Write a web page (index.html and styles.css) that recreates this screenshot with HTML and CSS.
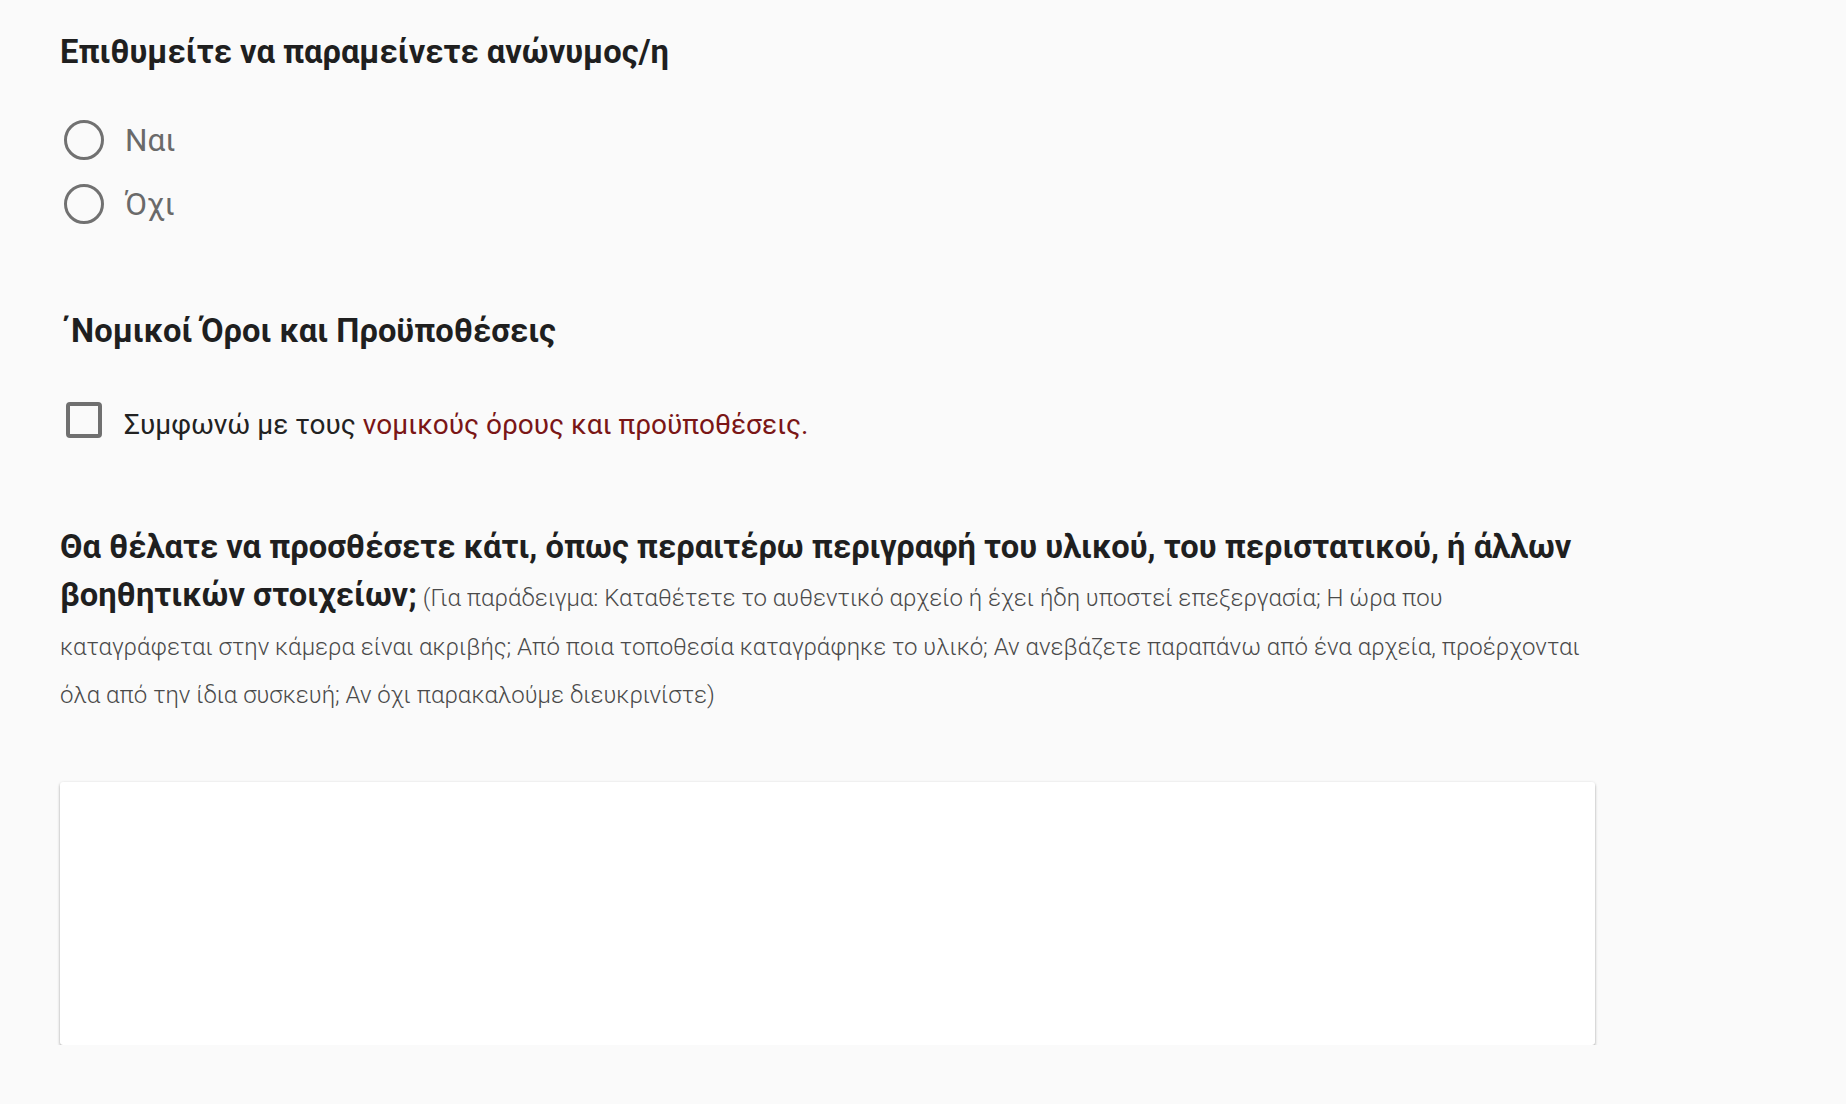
FILE: index.html
```html
<!DOCTYPE html>
<html lang="el">
<head>
  <meta charset="UTF-8" />
  <meta name="viewport" content="width=device-width, initial-scale=1.0"/>
  <title>Υποβολή υλικού</title>
  <link rel="stylesheet" href="styles.css">
</head>
<body>
  <form class="report-form">
    <!-- Anonymity -->
    <section class="field" id="anonymous">
      <h2 class="field-title">Επιθυμείτε να παραμείνετε ανώνυμος/η</h2>
      <div class="radio-group">
        <label class="radio">
          <input type="radio" name="anonymous" value="yes" />
          <span>Ναι</span>
        </label>
        <label class="radio">
          <input type="radio" name="anonymous" value="no" />
          <span>Όχι</span>
        </label>
      </div>
    </section>

    <!-- Terms -->
    <section class="field" id="terms">
      <h2 class="field-title">΄Νομικοί Όροι και Προϋποθέσεις</h2>
      <label class="checkbox">
        <input type="checkbox" name="terms" />
        <span>Συμφωνώ με τους <a href="#">νομικούς όρους και προϋποθέσεις.</a></span>
      </label>
    </section>

    <!-- Extra info -->
    <section class="field" id="extra">
      <p class="field-question">
        <strong>Θα θέλατε να προσθέσετε κάτι, όπως περαιτέρω περιγραφή του υλικού, του περιστατικού, ή άλλων βοηθητικών στοιχείων;</strong>
        <small>(Για παράδειγμα: Καταθέτετε το αυθεντικό αρχείο ή έχει ήδη υποστεί επεξεργασία; Η ώρα που καταγράφεται στην κάμερα είναι ακριβής; Από ποια τοποθεσία καταγράφηκε το υλικό; Αν ανεβάζετε παραπάνω από ένα αρχεία, προέρχονται όλα από την ίδια συσκευή; Αν όχι παρακαλούμε διευκρινίστε)</small>
      </p>
      <textarea name="details"></textarea>
    </section>
  </form>
</body>
</html>
```

FILE: styles.css
```css
* {
  box-sizing: border-box;
  margin: 0;
  padding: 0;
}
body {
  font-family: Roboto, 'Noto Sans', sans-serif;
  background: #fafafa;
  color: #212121;
}
.report-form {
  width: 1535px;
  margin-left: 60px;
  padding-top: 30px;
}
.field-title {
  font-size: 32.7px;
  line-height: 44px;
  font-weight: 700;
  color: #1f1f1f;
}

/* Radios */
.radio-group {
  margin-top: 34px;
}
.radio {
  display: flex;
  align-items: center;
  height: 64px;
  gap: 21px;
  font-size: 31.5px;
  color: #6a6a6a;
  cursor: pointer;
}
.radio input {
  appearance: none;
  width: 40px;
  height: 40px;
  margin-left: 4px;
  border: 3px solid #717171;
  border-radius: 50%;
  background: transparent;
}
.radio input:checked {
  background: radial-gradient(circle, #717171 0 8px, transparent 9px);
}

/* Checkbox */
#terms {
  margin-top: 73px;
}
.checkbox {
  display: flex;
  align-items: center;
  height: 64px;
  margin-top: 39px;
  gap: 22px;
  font-size: 28px;
  color: #222;
  cursor: pointer;
}
.checkbox input {
  appearance: none;
  width: 36px;
  height: 36px;
  margin-left: 6px;
  margin-top: -8px;
  border: 4px solid #707070;
  border-radius: 4px;
  background: transparent;
}
.checkbox input:checked {
  background: #707070;
}
.checkbox a {
  color: #7a1616;
  text-decoration: none;
}

/* Extra info */
#extra {
  margin-top: 70px;
}
.field-question {
  font-size: 24px;
  line-height: 48.4px;
}
.field-question strong {
  font-size: 32.7px;
  line-height: 1;
  font-weight: 700;
  color: #1f1f1f;
}
.field-question small {
  font-size: 24px;
  line-height: 1;
  font-weight: 300;
  color: #4a4a4a;
}
textarea {
  display: block;
  width: 100%;
  height: 263px;
  margin-top: 62px;
  border: none;
  border-radius: 3px;
  background: #fff;
  box-shadow: 0 2px 3px rgba(0,0,0,0.3), 0 0 3px rgba(0,0,0,0.08);
  font: inherit;
  resize: none;
}
```
